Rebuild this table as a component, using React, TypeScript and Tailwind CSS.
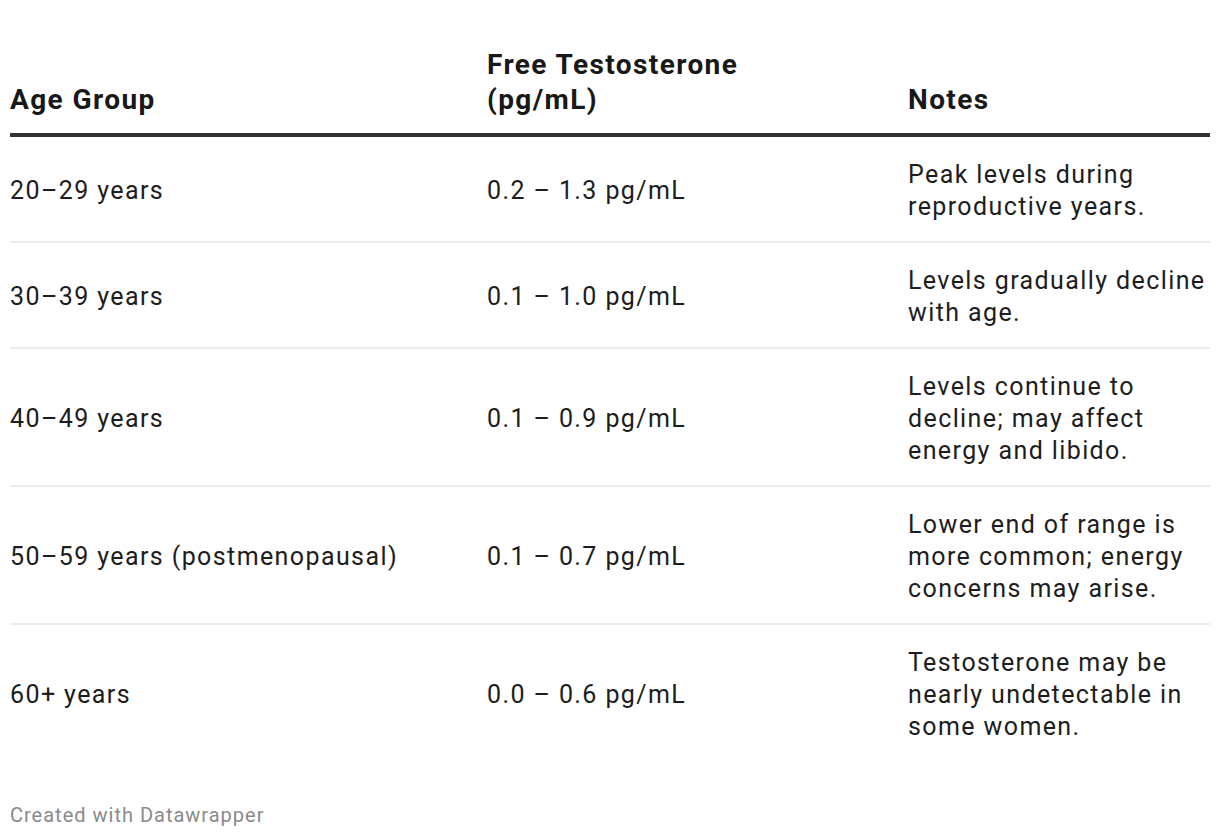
const rows = [
  { age: "20–29 years", range: "0.2 – 1.3 pg/mL", notes: "Peak levels during reproductive years." },
  { age: "30–39 years", range: "0.1 – 1.0 pg/mL", notes: "Levels gradually decline with age." },
  { age: "40–49 years", range: "0.1 – 0.9 pg/mL", notes: "Levels continue to decline; may affect energy and libido." },
  { age: "50–59 years (postmenopausal)", range: "0.1 – 0.7 pg/mL", notes: "Lower end of range is more common; energy concerns may arise." },
  { age: "60+ years", range: "0.0 – 0.6 pg/mL", notes: "Testosterone may be nearly undetectable in some women." },
];

export default function App() {
  return (
    <div className="min-h-[838px] w-[1220px] bg-white px-[10px] pt-[47px] font-['Roboto',sans-serif] text-[#1d1d1d]">
      <table className="w-[1200px] table-fixed border-collapse text-left">
        <colgroup>
          <col className="w-[477px]" />
          <col className="w-[421px]" />
          <col className="w-[302px]" />
        </colgroup>
        <thead>
          <tr className="border-b-[4px] border-[#333333]">
            {["Age Group", "Free Testosterone (pg/mL)", "Notes"].map((h) => (
              <th key={h} className="pb-[16px] pr-4 align-bottom text-[28px] leading-[35px] tracking-[1.4px] font-bold text-[#181818] last:pr-0">
                {h === "Free Testosterone (pg/mL)" ? (
                  <>
                    Free Testosterone
                    <br />
                    (pg/mL)
                  </>
                ) : (
                  h
                )}
              </th>
            ))}
          </tr>
        </thead>
        <tbody>
          {rows.map((r, i) => (
            <tr key={r.age} className={i < rows.length - 1 ? "border-b-2 border-[#ececec]" : ""}>
              <td className="pt-[22px] pb-[18px] pr-4 align-middle text-[25px] leading-[32px] tracking-[1.4px]">{r.age}</td>
              <td className="pt-[22px] pb-[18px] pr-4 align-middle text-[25px] leading-[32px] tracking-[1.4px]">{r.range}</td>
              <td className="pt-[22px] pb-[18px] align-middle text-[25px] leading-[32px] tracking-[1.4px]">{r.notes}</td>
            </tr>
          ))}
        </tbody>
      </table>
      <p className="mt-[42px] text-[20px] leading-[24px] tracking-[1px] text-[#8a8a8a]">Created with Datawrapper</p>
    </div>
  );
}
